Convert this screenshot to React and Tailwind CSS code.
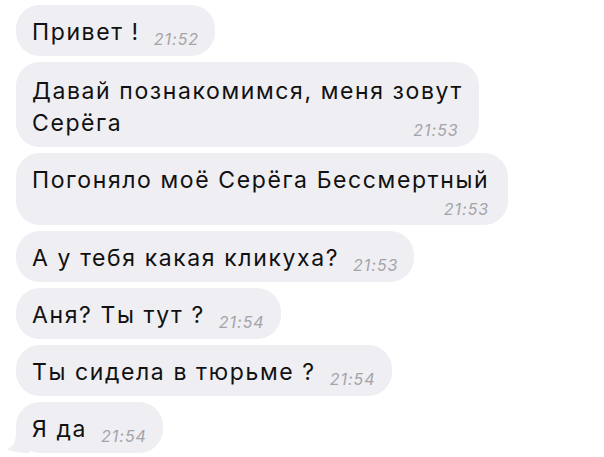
import React from 'react';

function Time({ children, className = '' }) {
  return (
    <span className={`text-[16px] italic leading-none tracking-[1px] text-[#a3a3a8] ${className}`}>
      {children}
    </span>
  );
}

function Bubble({ children, tail = false, className = '' }) {
  return (
    <div className={`relative rounded-[24px] bg-[#eeeef3] pl-4 pr-4 pt-[12px] pb-[8px] ${className}`}>
      {tail && (
        <svg className="absolute -left-[9px] bottom-0" width="22" height="20" viewBox="0 0 22 20">
          <path d="M22 0 L22 20 C14 20 6 19 0 16 C6 14 9 9 9 0 Z" fill="#eeeef3" />
        </svg>
      )}
      <div className="relative">{children}</div>
    </div>
  );
}

function InlineMsg({ text, time, tail }) {
  return (
    <Bubble tail={tail}>
      <div className="flex items-baseline leading-[31px]">
        <span>{text}</span>
        <Time className="ml-[14px] translate-y-[5px]">{time}</Time>
      </div>
    </Bubble>
  );
}

export default function App() {
  return (
    <div className="min-h-screen w-full bg-white font-['Inter','Liberation_Sans',Arial,sans-serif] text-[23px] tracking-[1.6px] text-[#111]">
      <div className="flex flex-col items-start gap-[6px] pl-4 pt-[5px]">
        <InlineMsg text="Привет !" time="21:52" />

        <Bubble className="pt-[13px]">
          <div className="leading-[32px]">Давай познакомимся, меня зовут</div>
          <div className="flex items-baseline justify-between leading-[32px]">
            <span>Серёга</span>
            <Time className="mr-[4px] translate-y-[5px]">21:53</Time>
          </div>
        </Bubble>

        <Bubble className="pr-[19px]">
          <div className="leading-[31px]">Погоняло моё Серёга Бессмертный</div>
          <div className="mt-[5px] text-right text-[16px] leading-none">
            <Time>21:53</Time>
          </div>
        </Bubble>

        <InlineMsg text="А у тебя какая кликуха?" time="21:53" />
        <InlineMsg text="Аня? Ты тут ?" time="21:54" />
        <InlineMsg text="Ты сидела в тюрьме ?" time="21:54" />
        <InlineMsg text="Я да" time="21:54" tail />
      </div>
    </div>
  );
}
